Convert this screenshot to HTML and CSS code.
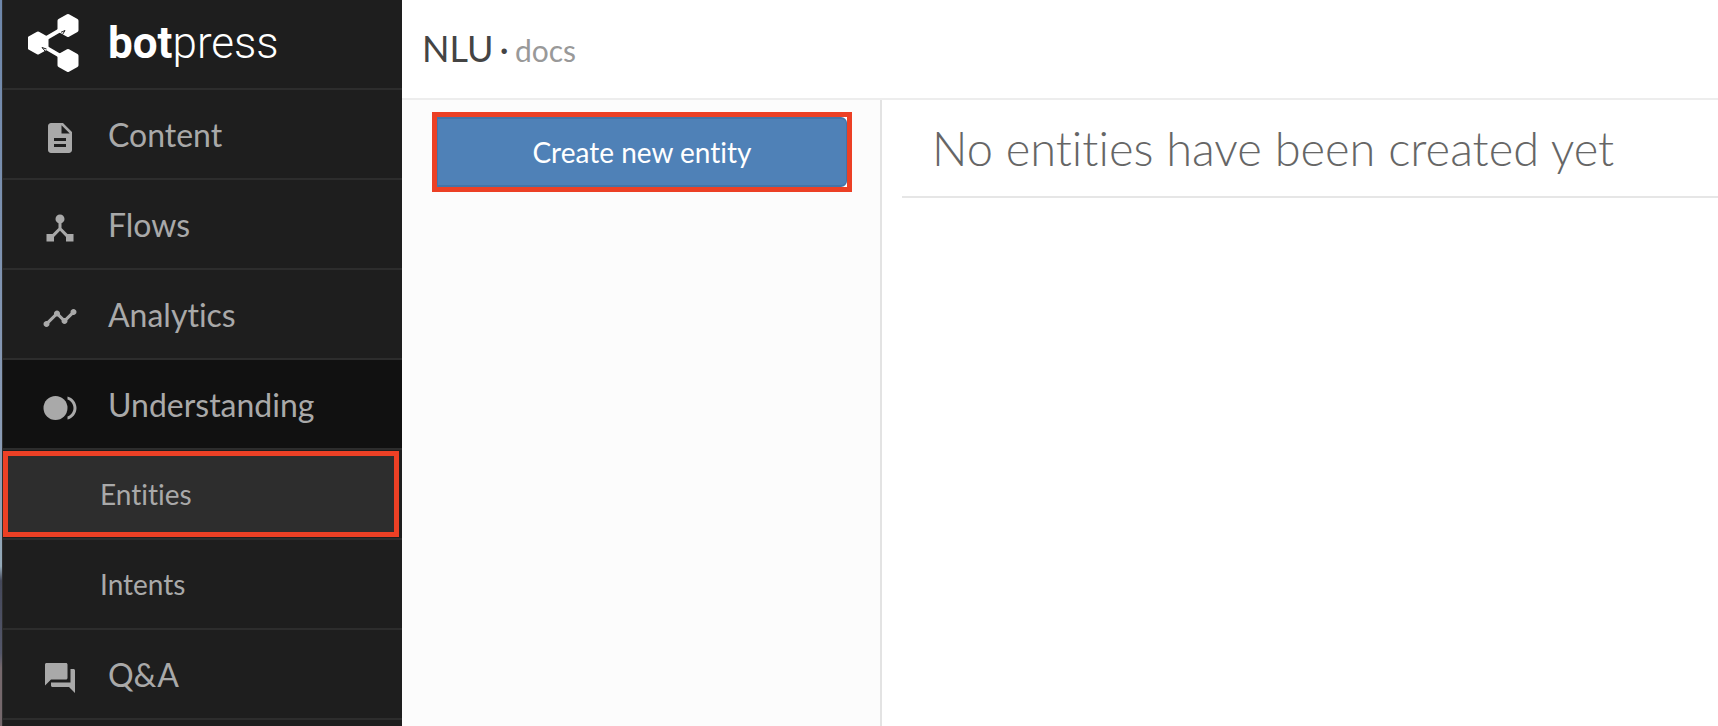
FILE: index.html
```html
<!DOCTYPE html>
<html lang="en">
<head>
<meta charset="utf-8">
<title>Botpress – NLU Entities</title>
<link rel="stylesheet" href="styles.css">
</head>
<body>
<div class="app">
  <nav class="sidebar" aria-label="Main">
    <a class="brand" href="#">
      <svg class="brand-mark" viewBox="0 0 52 60" aria-hidden="true">
        <path d="M10 30L40 12.500M10 30L40 47.500" stroke="#fff" stroke-width="4"/>
        <g fill="#fff" stroke="#fff" stroke-width="4" stroke-linejoin="round">
          <path d="M40 3l8.500 4.800v9.400L40 22l-8.500-4.800V7.800z"/>
          <path d="M10 20.500l8.500 4.800v9.400L10 39.500l-8.500-4.800v-9.400z"/>
          <path d="M40 38l8.500 4.800v9.400L40 57l-8.500-4.800v-9.400z"/>
        </g>
        <path d="M34.500 21.500L37 17.500l-4 1.800M17 38L14 34.500l4.500 1.500" fill="none" stroke="#1e1e1e" stroke-width="1"/>
      </svg>
      <span class="wordmark"><b>bot</b>press</span>
    </a>
    <ul class="menu">
      <li class="menu-row"><a class="menu-link" href="#">
        <svg class="icon" viewBox="0 0 24 24" aria-hidden="true"><path d="M14 2H6c-1.100 0-1.990.9-1.990 2L4 20c0 1.100.89 2 1.990 2H18c1.100 0 2-.9 2-2V8l-6-6zm2 16H8v-2h8v2zm0-4H8v-2h8v2zm-3-5V3.500L18.500 9H13z"/></svg>
        Content</a></li>
      <li class="menu-row"><a class="menu-link" href="#">
        <svg class="icon" viewBox="0 0 24 24" aria-hidden="true"><path d="M17 16l-4-4V8.820C14.160 8.400 15 7.300 15 6c0-1.660-1.340-3-3-3S9 4.340 9 6c0 1.300.84 2.400 2 2.820V12l-4 4H3v5h5v-3.050l4-4.200 4 4.200V21h5v-5h-4z"/></svg>
        Flows</a></li>
      <li class="menu-row"><a class="menu-link" href="#">
        <svg class="icon" viewBox="0 0 24 24" aria-hidden="true"><path d="M23 8c0 1.100-.9 2-2 2-.18 0-.35-.02-.51-.07l-3.560 3.550c.05.16.07.34.07.52 0 1.100-.9 2-2 2s-2-.9-2-2c0-.18.02-.36.07-.52l-2.550-2.550c-.16.05-.34.07-.52.07s-.36-.02-.52-.07l-4.550 4.560c.05.16.07.33.07.51 0 1.100-.9 2-2 2s-2-.9-2-2 .9-2 2-2c.18 0 .35.02.51.07l4.560-4.550C8.020 9.360 8 9.180 8 9c0-1.100.9-2 2-2s2 .9 2 2c0 .18-.02.36-.07.52l2.550 2.550c.16-.05.34-.07.52-.07s.36.02.52.07l3.550-3.560C19.020 8.350 19 8.180 19 8c0-1.100.9-2 2-2s2 .9 2 2z"/></svg>
        Analytics</a></li>
      <li class="menu-row open"><a class="menu-link" href="#">
        <svg class="icon" viewBox="0 0 24 24" aria-hidden="true"><circle cx="9" cy="12" r="8"/><path d="M21 12c0-2.610-1.670-4.830-4-5.650V4.260c3.450.89 6 4.010 6 7.740s-2.550 6.850-6 7.740v-2.090c2.330-.82 4-3.040 4-5.650z"/></svg>
        Understanding</a></li>
      <li class="menu-row"><a class="menu-link sub current" href="#" aria-current="page">Entities</a></li>
      <li class="menu-row"><a class="menu-link sub" href="#">Intents</a></li>
      <li class="menu-row"><a class="menu-link" href="#">
        <svg class="icon" viewBox="0 0 24 24" aria-hidden="true"><path d="M21 6h-2v9H6v2c0 .55.45 1 1 1h11l4 4V7c0-.55-.45-1-1-1zm-4 6V3c0-.55-.45-1-1-1H3c-.55 0-1 .45-1 1v14l4-4h10c.55 0 1-.45 1-1z"/></svg>
        Q&amp;A</a></li>
    </ul>
  </nav>
  <div class="page">
    <header class="topbar">
      <h1 class="page-title">NLU</h1><span class="dot">·</span><a class="docs" href="#">docs</a>
    </header>
    <div class="columns">
      <aside class="entity-list">
        <div class="highlight"><button class="create" type="button">Create new entity</button></div>
      </aside>
      <main class="content">
        <h2 class="empty">No entities have been created yet</h2>
      </main>
    </div>
  </div>
</div>
</body>
</html>
```
FILE: styles.css
```css
* { box-sizing: border-box; }

body {
  margin: 0;
  font-family: Lato, "Liberation Sans", sans-serif;
  font-variant-ligatures: none;
  color: #444;
  background: #fff;
}

a { color: inherit; text-decoration: none; }

.app {
  display: flex;
  height: 100vh;
  overflow: hidden;
  padding-left: 2px;
  background: linear-gradient(#6e87ab 0, #8a9bb5 60%, #94a9b8 78%, #44485a 80%, #54576a 90%, #75686c 92%, #75686c 100%);
}

.sidebar {
  flex: 0 0 400px;
  background: #1e1e1e;
  color: #a9a9a9;
  border-left: 1px solid #2d2d2d;
}

.brand {
  display: flex;
  align-items: center;
  gap: 28px;
  height: 90px;
  padding: 0 25px 2px;
  border-bottom: 2px solid #2d2d2d;
  color: #fff;
}

.brand-mark { width: 52px; height: 60px; }

.wordmark {
  font: 300 44px/48px Roboto, sans-serif;
}

.wordmark b { font-weight: 700; }

.menu { margin: 0; padding: 0; list-style: none; }

.menu-row {
  display: flex;
  height: 90px;
  border-bottom: 2px solid #2d2d2d;
}

.menu-row.open { background: #111; }

.menu-link {
  flex: 1;
  display: flex;
  align-items: center;
  gap: 30px;
  padding-left: 39px;
  font-size: 32px;
}

.icon {
  width: 36px;
  height: 36px;
  margin-top: 8px;
  fill: currentColor;
}

.menu-link.sub { padding-left: 97px; font-size: 28px; }

.menu-link.current {
  margin: 1px 3px 1px 0;
  padding-left: 92px;
  border: 5px solid #ec4025;
  background: #2d2d2d;
}

.page {
  flex: 1;
  min-width: 0;
  display: flex;
  flex-direction: column;
  background: #fff;
}

.topbar {
  display: flex;
  align-items: baseline;
  gap: 6px;
  height: 100px;
  padding: 26px 20px 0;
  border-bottom: 2px solid #ededed;
}

.page-title { margin: 0; font-size: 36px; font-weight: 400; }

.dot { font-size: 36px; }

.docs { font-size: 30px; color: #999; }

.columns { flex: 1; display: flex; }

.entity-list {
  flex: 0 0 480px;
  padding: 12px 28px 0 30px;
  background: #fcfcfc;
  border-right: 2px solid #e3e3e3;
}

.highlight { border: 5px solid #ec4025; background: #fff; }

.create {
  display: block;
  width: 100%;
  height: 70px;
  padding: 0;
  border: 2px solid #4474a8;
  border-width: 2px 1px;
  border-radius: 0 6px 6px 0;
  background: #4f81b7;
  color: #fff;
  font: 28px/34px Lato, "Liberation Sans", sans-serif;
  font-variant-ligatures: none;
}

.content { flex: 1; padding-left: 20px; }

.empty {
  margin: 0;
  padding: 19px 30px;
  border-bottom: 2px solid #e6e6e6;
  color: #666;
  font-size: 47px;
  line-height: 58px;
  font-weight: 300;
}
```
